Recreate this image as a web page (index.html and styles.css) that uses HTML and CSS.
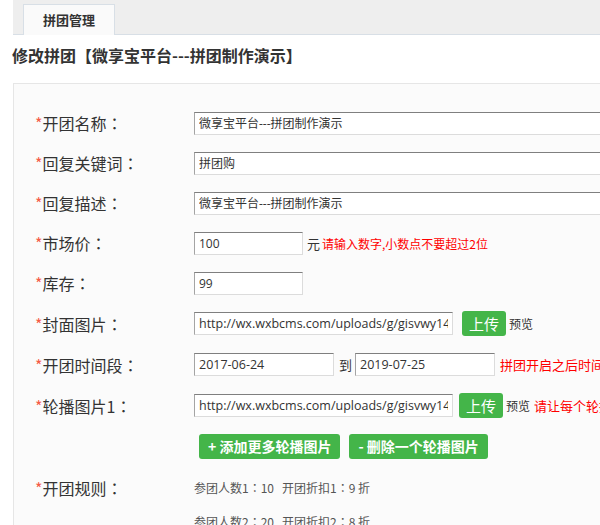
FILE: index.html
```html
<!DOCTYPE html>
<html lang="zh-CN">
<head>
<meta charset="utf-8">
<title>修改拼团</title>
<link rel="stylesheet" href="styles.css">
</head>
<body>
<div class="tabbar"><div class="tab">拼团管理</div></div>
<h1 class="title">修改拼团【微享宝平台---拼团制作演示】</h1>
<div class="panel">
  <div class="row">
    <div class="lbl"><span class="req">*</span>开团名称<span class="colon">：</span></div>
    <div class="field"><input class="txt wide" type="text" value="微享宝平台---拼团制作演示"></div>
  </div>
  <div class="row">
    <div class="lbl"><span class="req">*</span>回复关键词<span class="colon">：</span></div>
    <div class="field"><input class="txt wide" type="text" value="拼团购"></div>
  </div>
  <div class="row">
    <div class="lbl"><span class="req">*</span>回复描述<span class="colon">：</span></div>
    <div class="field"><input class="txt wide" type="text" value="微享宝平台---拼团制作演示"></div>
  </div>
  <div class="row">
    <div class="lbl"><span class="req">*</span>市场价<span class="colon">：</span></div>
    <div class="field"><input class="txt short" type="text" value="100"><span class="unit">元</span><span class="warn">请输入数字,小数点不要超过2位</span></div>
  </div>
  <div class="row">
    <div class="lbl"><span class="req">*</span>库存<span class="colon">：</span></div>
    <div class="field"><input class="txt short" type="text" value="99"></div>
  </div>
  <div class="row tall">
    <div class="lbl"><span class="req">*</span>封面图片<span class="colon">：</span></div>
    <div class="field"><input class="txt url" type="text" value="http://wx.wxbcms.com/uploads/g/gisvwy14"><button class="btn up up1">上传</button><span class="pv">预览</span></div>
  </div>
  <div class="row tall">
    <div class="lbl"><span class="req">*</span>开团时间段<span class="colon">：</span></div>
    <div class="field"><input class="txt date" type="text" value="2017-06-24"><span class="to">到</span><input class="txt date" type="text" value="2019-07-25"><span class="warn w2">拼团开启之后时间段内有效</span></div>
  </div>
  <div class="row tall">
    <div class="lbl"><span class="req">*</span>轮播图片1<span class="colon">：</span></div>
    <div class="field"><input class="txt url" type="text" value="http://wx.wxbcms.com/uploads/g/gisvwy14"><button class="btn up up2">上传</button><span class="pv pv2">预览</span><span class="warn w3">请让每个轮播图片尺寸一致</span></div>
  </div>
  <div class="row tall">
    <div class="lbl"></div>
    <div class="field btns"><button class="btn act">+ 添加更多轮播图片</button><button class="btn act">- 删除一个轮播图片</button></div>
  </div>
  <div class="row rules">
    <div class="lbl"><span class="req">*</span>开团规则<span class="colon">：</span></div>
    <div class="field rulelist">
      <div class="rule">参团人数1<span class="colon">：</span>10&nbsp;&nbsp;&nbsp;开团折扣1<span class="colon">：</span>9 折</div>
      <div class="rule">参团人数2<span class="colon">：</span>20&nbsp;&nbsp;&nbsp;开团折扣2<span class="colon">：</span>8 折</div>
    </div>
  </div>
</div>
</body>
</html>
```

FILE: styles.css
```css
html, body {
  margin: 0;
  padding: 0;
  background: #ffffff;
  overflow: hidden;
}
body {
  width: 600px;
  height: 525px;
  font-family: "Open Sans", "Noto Sans CJK SC", sans-serif;
  color: #333333;
}
.tabbar {
  margin-left: 13px;
  height: 34px;
  background: #eeeeee;
  border-bottom: 1px solid #d8dfe6;
  display: flex;
  align-items: flex-end;
}
.tab {
  margin-left: 10px;
  width: 92px;
  height: 31px;
  margin-bottom: -1px;
  background: #fafafa;
  border: 1px solid #d8dfe6;
  border-bottom: none;
  box-sizing: border-box;
  font-family: "Noto Sans CJK SC", sans-serif;
  font-size: 13px;
  font-weight: bold;
  line-height: 29px;
  text-align: center;
  color: #333;
}
.title {
  margin: 8px 0 16px 12px;
  font-family: "Noto Sans CJK SC", sans-serif;
  font-size: 16px;
  font-weight: bold;
  line-height: 24px;
  color: #333;
  white-space: nowrap;
}
.panel {
  margin-left: 13px;
  width: 700px;
  background: #fbfbfb;
  border: 1px solid #e6e6e6;
  padding: 19px 0 0 21px;
  box-sizing: border-box;
  height: 460px;
}
.row {
  display: flex;
  align-items: center;
  height: 40px;
}
.row.tall {
  height: 41px;
}
.lbl {
  width: 159px;
  flex: none;
  font-family: "Noto Sans CJK SC", sans-serif;
  font-size: 16px;
  line-height: 22px;
  color: #333;
  white-space: nowrap;
}
.colon {
  font-family: "Noto Sans CJK JP", "Noto Sans CJK TC", sans-serif;
  font-feature-settings: "locl" 0;
}
.req {
  color: #f55a46;
}
.field {
  display: flex;
  align-items: center;
  white-space: nowrap;
}
.txt {
  height: 23px;
  box-sizing: border-box;
  margin: 0;
  padding: 0 4px;
  border-top: 1px solid #7f7f7f;
  border-left: 1px solid #a4a4a4;
  border-right: 1px solid #dcdcdc;
  border-bottom: 1px solid #dcdcdc;
  background: #ffffff;
  font-family: "Open Sans", "Noto Sans CJK SC", sans-serif;
  font-size: 12px;
  color: #333;
  outline: none;
}
.txt.wide { width: 500px; }
.txt.short { width: 109px; }
.txt.url { width: 259px; font-size: 12.5px; }
.txt.date { width: 140px; font-size: 12.5px; }
.unit {
  margin-left: 4px;
  font-family: "Noto Sans CJK SC", sans-serif;
  font-size: 13px;
}
.warn {
  margin-left: 2px;
  color: #ff0000;
  font-family: "Noto Sans CJK SC", sans-serif;
  font-size: 12px;
}
.w2 { margin-left: 5px; font-size: 13px; }
.w3 { margin-left: 4px; font-size: 13px; }
.to {
  margin: 0 3px 0 5px;
  font-family: "Noto Sans CJK SC", sans-serif;
  font-size: 13px;
  color: #333;
}
.btn {
  border: none;
  margin: 0;
  background: #44b549;
  color: #ffffff;
  border-radius: 3px;
  font-family: "Noto Sans CJK SC", sans-serif;
  height: 25px;
  padding: 0;
  cursor: pointer;
}
.btn.up {
  width: 44px;
  font-size: 15px;
  line-height: 25px;
}
.up1 { margin-left: 9px; }
.up2 { margin-left: 6px; }
.pv {
  margin-left: 3px;
  font-family: "Noto Sans CJK SC", sans-serif;
  font-size: 12px;
  color: #333;
}
.btns {
  padding-left: 5px;
  gap: 9px;
}
.btn.act {
  padding: 0 9px;
  font-size: 14px;
  font-weight: bold;
  line-height: 25px;
}
.row.rules {
  height: auto;
  align-items: flex-start;
  padding-top: 4px;
}
.row.rules .lbl {
  line-height: 34px;
}
.rulelist {
  flex-direction: column;
  align-items: flex-start;
}
.rule {
  font-family: "Noto Sans CJK SC", sans-serif;
  font-size: 12px;
  line-height: 34px;
  color: #555;
}
```
